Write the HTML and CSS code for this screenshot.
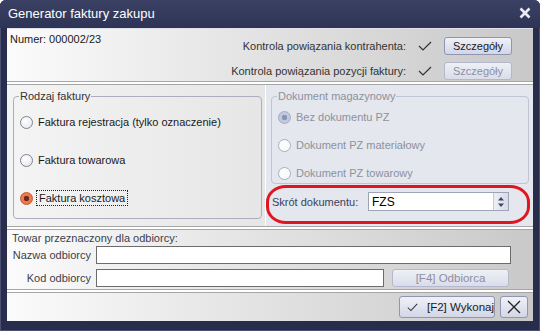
FILE: index.html
```html
<!DOCTYPE html>
<html lang="pl">
<head>
  <meta charset="UTF-8">
  <meta name="viewport" content="width=device-width, initial-scale=1.0">
  <title>Generator faktury zakupu</title>
  <link rel="stylesheet" href="styles.css">
</head>
<body>
  <div class="okno">
    <div class="tytul">
      <span>Generator faktury zakupu</span>
      <svg class="zamknij" width="12" height="12" viewBox="0 0 12 12"><path d="M1.5 1.5 L10.5 10.5 M10.5 1.5 L1.5 10.5" stroke="#e8ebf4" stroke-width="2.6"/></svg>
    </div>

    <div class="klient">
      <div class="panel-gora">
        <div class="numer">Numer: 000002/23</div>
        <div class="kontrole">
          <span class="etykieta">Kontrola powiązania kontrahenta:</span>
          <svg class="ptaszek" width="14" height="10" viewBox="0 0 14 10"><path d="M1 5 L5 9 L13 1" fill="none" stroke="#333" stroke-width="1.2"/></svg>
          <button class="przycisk">Szczegóły</button>

          <span class="etykieta">Kontrola powiązania pozycji faktury:</span>
          <svg class="ptaszek" width="14" height="10" viewBox="0 0 14 10"><path d="M1 5 L5 9 L13 1" fill="none" stroke="#333" stroke-width="1.2"/></svg>
          <button class="przycisk wylaczony">Szczegóły</button>
        </div>
      </div>

      <div class="panel-srodek">
        <div class="lewa">
          <fieldset class="grupa">
            <legend>Rodzaj faktury</legend>
            <div class="opcje duze">
              <div class="opcja"><span class="radio"></span>Faktura rejestracja (tylko oznaczenie)</div>
              <div class="opcja"><span class="radio"></span>Faktura towarowa</div>
              <div class="opcja"><span class="radio zaznaczony"></span><span class="fokus">Faktura kosztowa</span></div>
            </div>
          </fieldset>
        </div>

        <div class="prawa">
          <fieldset class="grupa nieaktywna">
            <legend>Dokument magazynowy</legend>
            <div class="opcje">
              <div class="opcja"><span class="radio zaznaczony-szary"></span>Bez dokumentu PZ</div>
              <div class="opcja"><span class="radio"></span>Dokument PZ materiałowy</div>
              <div class="opcja"><span class="radio"></span>Dokument PZ towarowy</div>
            </div>
          </fieldset>
          <div class="skrot">
            <span class="skrot-etykieta">Skrót dokumentu:</span>
            <div class="pole-spin">
              <span>FZS</span>
              <span class="spin">
                <svg width="8" height="12" viewBox="0 0 8 12"><path d="M4 1 L7 4.5 H1 Z M4 11 L7 7.5 H1 Z" fill="#3d4560"/></svg>
              </span>
            </div>
          </div>
          <div class="obwodka"></div>
        </div>
      </div>

      <div class="panel-odbiorca">
        <div class="naglowek">Towar przeznaczony dla odbiorcy:</div>
        <div class="formularz">
          <label>Nazwa odbiorcy</label>
          <div class="wiersz"><input class="pole dlugie" type="text"></div>
          <label>Kod odbiorcy</label>
          <div class="wiersz">
            <input class="pole krotkie" type="text">
            <button class="przycisk wylaczony odbiorca">[F4] Odbiorca</button>
          </div>
        </div>
      </div>

      <div class="panel-stopka">
        <button class="przycisk wykonaj">
          <svg width="14" height="11" viewBox="0 0 14 11"><path d="M1 5.5 L5 9.5 L13 1" fill="none" stroke="#333" stroke-width="1.3"/></svg>
          <span>[F2] Wykonaj</span>
        </button>
        <button class="przycisk anuluj">
          <svg width="14" height="14" viewBox="0 0 14 14"><path d="M1 1 L13 13 M13 1 L1 13" stroke="#222" stroke-width="1.3"/></svg>
        </button>
      </div>
    </div>
  </div>
</body>
</html>
```

FILE: styles.css
```css
* {
  box-sizing: border-box;
}
body {
  margin: 0;
  font-family: "Liberation Sans", Arial, sans-serif;
  font-size: 11px;
  color: #1a1a1a;
}
.okno {
  width: 540px;
  height: 331px;
  background: #272d4b;
  padding: 0 7px 10px 7px;
  display: flex;
  flex-direction: column;
  border-radius: 6px 6px 0 0;
  box-shadow: inset 0 0 0 1px #4a5175;
}
.tytul {
  height: 28px;
  display: flex;
  align-items: center;
  justify-content: space-between;
  color: #fff;
  font-size: 13px;
  padding: 0 9px 2px 8px;
  background: linear-gradient(#3a4164, #2d3455);
  margin: 0 -7px;
  border-radius: 6px 6px 0 0;
}
.klient {
  flex: 1;
  background: #fff;
  border-top: 1px solid #dfe1ea;
  display: flex;
  flex-direction: column;
}
.panel-gora {
  height: 53px;
  display: flex;
  justify-content: space-between;
  padding: 4px 21px 0 3px;
  background: linear-gradient(90deg, #fbfbfb, #c8c8c8);
  border-bottom: 1px solid #a6a6a6;
}
.kontrole {
  display: grid;
  grid-template-columns: auto 14px 68px;
  column-gap: 12px;
  row-gap: 4px;
  align-items: center;
  justify-items: end;
  margin-top: 3px;
  color: #333;
}
.kontrole .przycisk {
  margin-left: 7px;
}
.przycisk {
  font-family: inherit;
  font-size: 11px;
  color: #1a1a1a;
  height: 18px;
  width: 68px;
  padding: 0;
  border: 1px solid #8f95b3;
  border-radius: 3px;
  background: linear-gradient(#f0f1f8, #d3d6e6);
  white-space: nowrap;
}
.przycisk.wylaczony {
  color: #8b8fa2;
  border-color: #b4b8cc;
  background: linear-gradient(#eef0f6, #dadcea);
}
.panel-srodek {
  height: 143px;
  margin-top: 2px;
  border-top: 1px solid #a6a6a6;
  border-bottom: 1px solid #a6a6a6;
  display: flex;
}
.lewa {
  width: 259px;
  padding: 5px 3px 0 6px;
  background: linear-gradient(90deg, #f4f4f4, #e6e6e6);
  border-right: 1px solid #fff;
}
.prawa {
  flex: 1;
  position: relative;
  padding: 5px 4px 0 5px;
  background: #e4e7ed;
}
.grupa {
  margin: 0;
  padding: 0 0 0 6px;
  border: 1px solid #acaec0;
  border-radius: 4px;
  height: 129px;
}
.grupa legend {
  padding: 0 1px;
  margin-left: -1px;
  color: #333;
}
.grupa.nieaktywna {
  height: 94px;
  border-color: #c0c5d3;
}
.grupa.nieaktywna legend, .grupa.nieaktywna .opcja {
  color: #8d919e;
}
.opcje {
  display: flex;
  flex-direction: column;
  margin-top: 1px;
}
.opcja {
  height: 28px;
  display: flex;
  align-items: center;
  gap: 5px;
  color: #1a1a1a;
}
.opcje.duze .opcja {
  height: 38px;
}
.radio {
  width: 13px;
  height: 13px;
  border-radius: 50%;
  border: 1px solid #7f8392;
  background: radial-gradient(circle at 40% 35%, #fff, #e2e4ea);
  display: inline-flex;
  flex: none;
}
.nieaktywna .radio {
  border-color: #a9aebe;
  background: #fafbfd;
}
.radio.zaznaczony {
  border-color: #c5502c;
  background: radial-gradient(circle, #6b2a1c 0 2.5px, #ec7a4f 3px);
}
.nieaktywna .radio.zaznaczony-szary {
  border-color: #a3abc4;
  background: radial-gradient(circle, #8895b4 0 2.5px, #c2c9dc 3px);
}
.fokus {
  outline: 1px dotted #222;
  outline-offset: 1px;
  padding: 0 1px;
}
.skrot {
  display: flex;
  align-items: center;
  justify-content: space-between;
  margin-top: 8px;
  padding-right: 20px;
}
.skrot-etykieta {
  color: #3a3f5a;
  margin-left: 1px;
}
.pole-spin {
  width: 141px;
  height: 19px;
  background: #fff;
  border: 1px solid #9ea3b6;
  display: flex;
  align-items: center;
  justify-content: space-between;
  padding-left: 3px;
  font-size: 12px;
  color: #000;
}
.spin {
  width: 15px;
  height: 17px;
  display: flex;
  align-items: center;
  justify-content: center;
  background: linear-gradient(90deg, #eef0f6, #d7dbe8);
  border-left: 1px solid #c6cad8;
}
.obwodka {
  position: absolute;
  left: 0;
  top: 100px;
  width: 264px;
  height: 39px;
  border: 3px solid #e01520;
  border-radius: 20px / 17px;
}
.panel-odbiorca {
  height: 61px;
  margin-top: 2px;
  border-top: 1px solid #a6a6a6;
  border-bottom: 1px solid #a6a6a6;
  padding: 2px 0 0 5px;
  background: linear-gradient(90deg, #fbfbfb, #c9c9c9);
  color: #3a3f4a;
}
.formularz {
  display: grid;
  grid-template-columns: 79px auto;
  column-gap: 5px;
  row-gap: 5px;
  align-items: center;
  margin-top: 2px;
}
.formularz label {
  text-align: right;
}
.wiersz {
  display: flex;
  gap: 8px;
  align-items: center;
}
.pole {
  height: 18px;
  border: 1px solid #6c6c6c;
  background: #fff;
  margin: 0;
}
.pole.dlugie {
  width: 415px;
}
.pole.krotkie {
  width: 288px;
}
.przycisk.odbiorca {
  width: 117px;
  height: 18px;
  font-size: 11.5px;
}
.panel-stopka {
  flex: 1;
  margin-top: 2px;
  border-top: 1px solid #a6a6a6;
  display: flex;
  justify-content: flex-end;
  align-items: flex-start;
  gap: 5px;
  padding: 3px 5px 0 0;
  background: linear-gradient(90deg, #fbfbfb, #c8c8c8);
}
.przycisk.wykonaj {
  width: 96px;
  height: 22px;
  font-size: 11.5px;
  display: flex;
  align-items: center;
  gap: 9px;
  padding-left: 7px;
}
.przycisk.anuluj {
  width: 28px;
  height: 22px;
  display: flex;
  align-items: center;
  justify-content: center;
}
```
